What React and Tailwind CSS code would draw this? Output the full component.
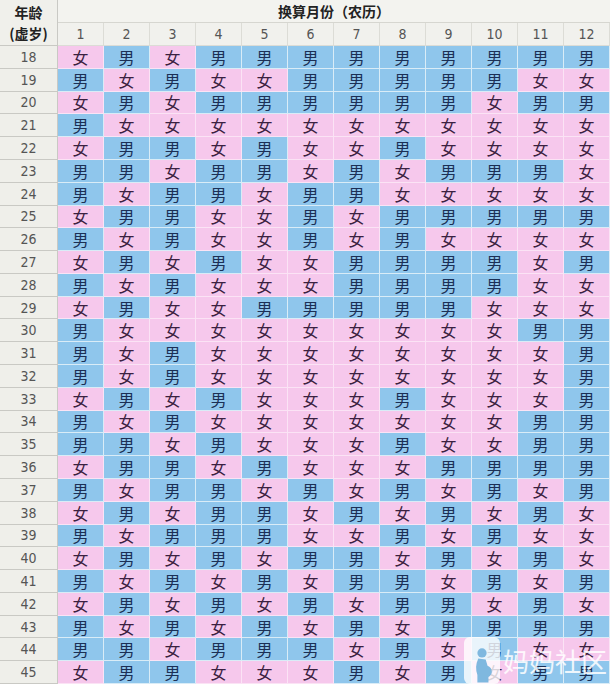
import React from "react";

// M = 男, F = 女 ; ages 18..45, months 1..12
const rows = [
  "FMFMMMMMMMMM",
  "MFMFFMMMMMFF",
  "FMFMMMMMMFMM",
  "MFFFFFFFFFFF",
  "FMMFMFFMFFFF",
  "MMFMMFMFMMMF",
  "MFMMFMMFFFFF",
  "FMMFFMFMMMMM",
  "MFMFFMFMFFFF",
  "FMFMFFMMMMFM",
  "MFMFFFMMMMFF",
  "FMFFMMMMMFFF",
  "MFFFFFFFFFMM",
  "MFMFFFFFFFFM",
  "MFMFFFFFFFFM",
  "FMFMFFFMFFFM",
  "MFMFFFFFFFMM",
  "MMFMFFFMFFMM",
  "FMMFMFFFMMMM",
  "MFMMFMFMFMFM",
  "FMFMMFMFMFMF",
  "MFMMMFFMFMFF",
  "FMFMFMMFMFMF",
  "MFMFMFMMFMFM",
  "FMFMFMFMMFMF",
  "MFMFMFMFMMMM",
  "MMFMMMFMFMFF",
  "FMMFFFMFMFMM",
];

const months = [1, 2, 3, 4, 5, 6, 7, 8, 9, 10, 11, 12];

const Cell = ({ v }) =>
  v === "M" ? (
    <div className="flex min-h-0 items-center justify-center overflow-hidden bg-[#8fc6ec] text-[#1b2f55] border-r border-b border-[#d9ecf7]">
      男
    </div>
  ) : (
    <div className="flex min-h-0 items-center justify-center overflow-hidden bg-[#f6c8ec] text-[#3b2140] border-r border-b border-[#fbe3f5]">
      女
    </div>
  );

const App = () => {
  return (
    <div className="relative w-[610px] h-[684px] overflow-hidden bg-white font-['Noto_Sans_CJK_SC',sans-serif]">
      <div className="grid h-full grid-cols-[58px_repeat(12,minmax(0,1fr))] grid-rows-[23px_23px_repeat(28,minmax(0,1fr))] text-[16px] leading-none">
        <div className="row-span-2 flex flex-col items-center justify-center bg-[#f0f0eb] border-r border-b border-[#c9c9c4] text-[14px] font-bold leading-[21px] text-[#222]">
          <span>年龄</span>
          <span>(虚岁)</span>
        </div>
        <div className="col-span-12 flex items-center justify-center bg-[#f3f3ef] border-b border-[#d6d6d0] text-[14px] font-bold text-[#222]">
          换算月份（农历）
        </div>
        {months.map((m) => (
          <div
            key={m}
            className="flex items-center justify-center bg-[#f1f1ed] border-r border-b border-[#dcdcd6] font-['DejaVu_Sans_Condensed',sans-serif] text-[14px] text-[#555]"
          >
            {m}
          </div>
        ))}
        {rows.map((r, i) => (
          <React.Fragment key={i}>
            <div className="flex min-h-0 items-center justify-center bg-[#efefea] border-r border-b border-[#c9c9c4] font-['DejaVu_Sans_Condensed',sans-serif] text-[14px] text-[#555]">
              {18 + i}
            </div>
            {r.split("").map((v, j) => (
              <Cell key={j} v={v} />
            ))}
          </React.Fragment>
        ))}
      </div>

      {/* watermark */}
      <div className="absolute left-[464px] top-[637px] flex items-center gap-[3px] whitespace-nowrap">
        <div className="flex h-[47px] w-[36px] items-end justify-center rounded-[6px] bg-white/80">
          <svg width="24" height="40" viewBox="0 0 26 40">
            <circle cx="13" cy="8" r="5" fill="#7fb8df" />
            <path
              d="M9 14 C6 20 6 26 8 32 L8 40 L20 40 L20 34 C25 32 25 24 19 22 L17 15 Z"
              fill="#7fb8df"
            />
          </svg>
        </div>
        <span className="text-[26px] leading-none text-white/85">妈妈社区</span>
      </div>
    </div>
  );
};

export default App;
